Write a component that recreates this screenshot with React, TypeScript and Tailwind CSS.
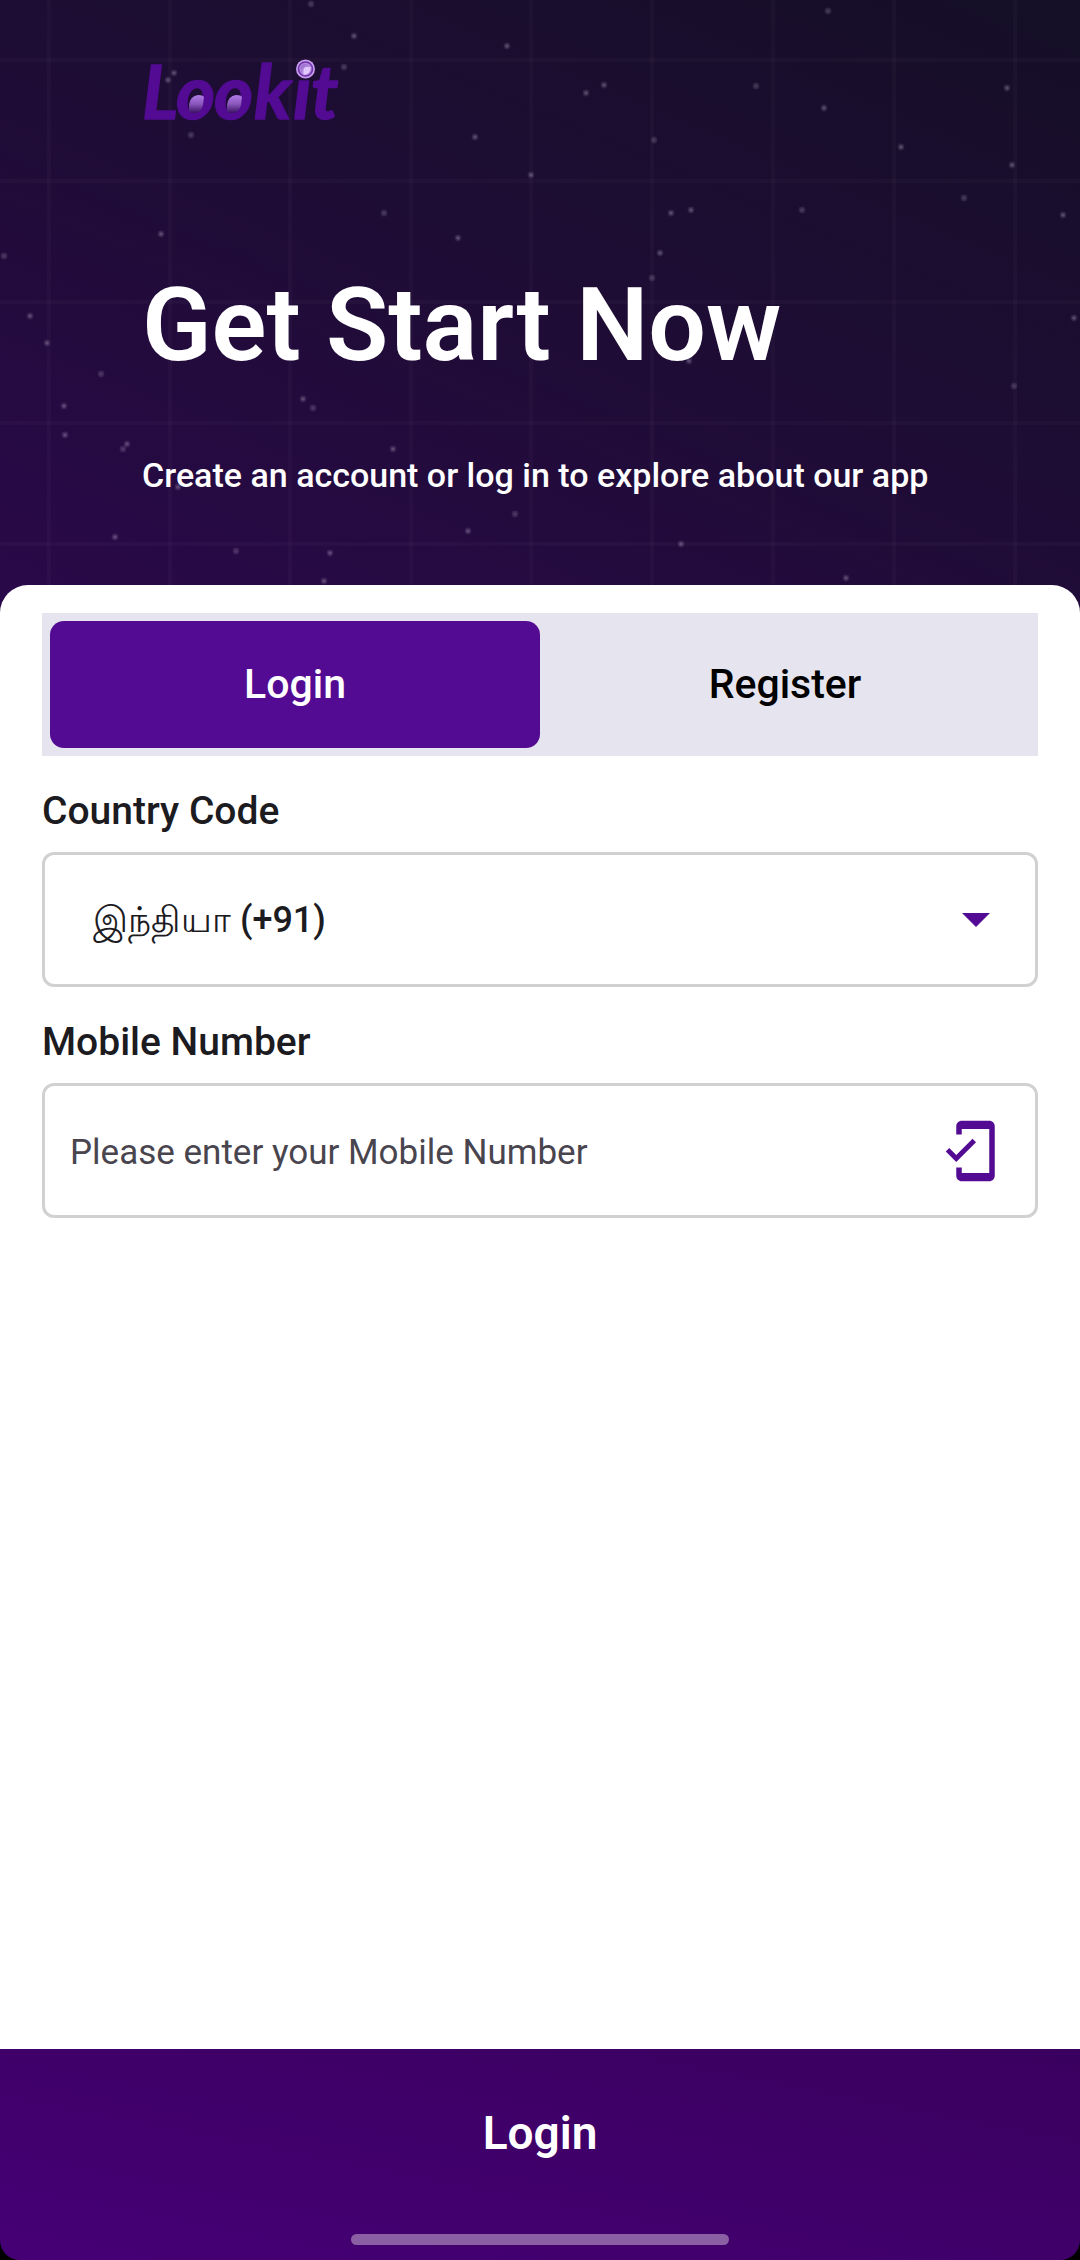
import { useState } from "react";

const stars: [number, number][] = [
  [311, 4], [354, 36], [507, 46], [344, 67], [174, 73], [168, 80], [191, 135], [475, 137], [531, 175],
  [384, 213], [161, 234], [458, 238], [4, 256], [30, 316], [47, 343], [101, 374], [64, 406], [303, 399],
  [313, 408], [65, 435], [127, 444], [123, 449], [393, 449], [178, 487], [515, 514], [468, 531], [115, 537],
  [236, 551], [330, 553], [324, 581], [828, 11], [604, 85], [586, 93], [756, 86], [824, 108], [1007, 88],
  [654, 140], [901, 147], [1012, 165], [964, 198], [691, 210], [671, 213], [802, 210], [1063, 215],
  [660, 253], [652, 278], [1074, 318], [689, 361], [1014, 386], [681, 544], [846, 578],
];
const columns = [49, 170, 290, 411, 531, 652, 773, 894, 1015];
const rows = [60, 181, 302, 423, 544];

function NightSky() {
  return (
    <svg
      className="absolute inset-0 h-full w-full"
      viewBox="0 0 1080 613"
      preserveAspectRatio="xMidYMin slice"
      aria-hidden="true"
    >
      <g stroke="#ffffff" strokeOpacity="0.025" strokeWidth="4">
        {columns.map((x) => (
          <line key={x} x1={x} x2={x} y1="0" y2="613" />
        ))}
        {rows.map((y) => (
          <line key={y} x1="0" x2="1080" y1={y} y2={y} />
        ))}
      </g>
      <g fill="#d9cfe6">
        {stars.map(([x, y], i) => (
          <g key={i}>
            <circle cx={x} cy={y} r="3.4" opacity="0.12" />
            <circle cx={x} cy={y} r="1.8" opacity={i % 3 === 0 ? 0.12 : 0.22} />
          </g>
        ))}
      </g>
    </svg>
  );
}

function Logo() {
  return (
    <svg className="h-[100px] w-[220px]" viewBox="0 0 220 100" role="img" aria-label="Lookit">
      <defs>
        <linearGradient id="eye" x1="0" y1="0" x2="0" y2="1">
          <stop offset="0" stopColor="#b07be6" />
          <stop offset="0.5" stopColor="#8a57bd" />
          <stop offset="1" stopColor="#3a1163" />
        </linearGradient>
        <linearGradient id="lens" x1="0" y1="0" x2="1" y2="1">
          <stop offset="0" stopColor="#8d5cc4" />
          <stop offset="1" stopColor="#d9b8fb" />
        </linearGradient>
      </defs>
      <text
        x="0 34 72 112 151 169"
        y="79"
        fill="#530b94"
        stroke="#530b94"
        strokeWidth="1.5"
        strokeLinejoin="round"
        fontFamily="Lato, sans-serif"
        fontSize="75"
        fontWeight="700"
        fontStyle="italic"
      >
        Lookit
      </text>
      <path d="M47 71V65Q48 56 56 55Q61 55 62 57L61 65Q59 72 54 73H49Z" fill="url(#eye)" />
      <path d="M85 71V65Q86 56 94 55Q99 55 100 57L99 65Q97 72 92 73H87Z" fill="url(#eye)" />
      <circle cx="163.5" cy="29" r="9.5" fill="#c79cf0" />
      <circle cx="163.5" cy="29" r="7" fill="#b58ae0" stroke="#6f35a8" strokeWidth="1.6" />
      <circle cx="163.5" cy="29" r="5" fill="url(#lens)" />
      <path d="M161.500 35V30Q161.500 27 164.500 27H168.500Q168.500 34 161.500 35Z" fill="#e3c8ff" />
    </svg>
  );
}

const boxClass =
  "h-[135px] w-full rounded-xl border-3 border-[#d1d1d1] bg-white text-[#1c1b1f] outline-none";
const labelClass = "flex h-24 items-center pt-[14px] text-[39px] font-medium text-[#1c1b1f]";

export default function App() {
  const [tab, setTab] = useState<"Login" | "Register">("Login");
  return (
    <div className="flex min-h-screen flex-col bg-black font-['Roboto','Noto_Sans',sans-serif]">
      <header className="relative bg-[linear-gradient(203deg,#150f27,#1f0c36_52%,#2a094a)] pb-7 text-white">
        <NightSky />
        <div className="relative flex h-[585px] flex-col items-start pr-8 pl-[142px] pt-10">
          <Logo />
          <h1 className="mt-[120px] text-[102px] leading-[130px] font-semibold whitespace-nowrap">Get Start Now</h1>
          <p className="mt-[65px] text-[34px] leading-10 font-medium whitespace-nowrap">
            Create an account or log in to explore about our app
          </p>
        </div>
      </header>

      <main className="relative -mt-7 flex-1 rounded-t-[28px] bg-white px-[42px] pt-7">
        <div role="tablist" className="grid h-[143px] grid-cols-2 bg-[#e6e4ef] p-2">
          {(["Login", "Register"] as const).map((name) => (
            <button
              key={name}
              type="button"
              role="tab"
              aria-selected={tab === name}
              onClick={() => setTab(name)}
              className={
                tab === name
                  ? "rounded-[14px] bg-[#530b94] text-[41px] font-medium text-white"
                  : "rounded-[14px] text-[41px] font-medium text-black"
              }
            >
              {name}
            </button>
          ))}
        </div>

        <form id="login-form" onSubmit={(e) => e.preventDefault()}>
          <label htmlFor="country" className={labelClass}>
            Country Code
          </label>
          <div className="relative">
            <select id="country" className={`${boxClass} appearance-none pr-28 pl-12 text-[36px] font-medium`}>
              <option>இந்தியா (+91)</option>
            </select>
            <svg
              className="pointer-events-none absolute top-1/2 right-12 h-[14px] w-7 -translate-y-1/2"
              viewBox="0 0 28 14"
              aria-hidden="true"
            >
              <path d="M0 0H28L14 14Z" fill="#530b94" />
            </svg>
          </div>

          <label htmlFor="mobile" className={labelClass}>
            Mobile Number
          </label>
          <div className="relative">
            <input
              id="mobile"
              type="tel"
              placeholder="Please enter your Mobile Number"
              className={`${boxClass} pt-1 pr-28 pl-[25px] text-[35px] placeholder:text-[#49454f]`}
            />
            <svg
              className="pointer-events-none absolute top-1/2 right-[35px] h-[66px] w-[66px] -translate-y-1/2"
              viewBox="0 0 24 24"
              fill="#530b94"
              aria-hidden="true"
            >
              <path d="M19 1H9c-1.1 0-2 .9-2 2v3h2V4h10v16H9v-2H7v3c0 1.1.9 2 2 2h10c1.1 0 2-.9 2-2V3c0-1.1-.9-2-2-2zM7.01 13.47l-2.55-2.55-1.27 1.27L7 16l7.19-7.19-1.27-1.27-5.91 5.93z" />
            </svg>
          </div>
        </form>
      </main>

      <footer className="flex flex-col items-center rounded-b-[20px] bg-linear-to-bl from-[#3a005f] to-[#450075] pb-[15px]">
        <button
          type="submit"
          form="login-form"
          className="h-[168px] w-full text-[46px] font-semibold text-white"
        >
          Login
        </button>
        <div className="mt-[17px] h-[11px] w-[35%] rounded-full bg-[#8a5fa4]" />
      </footer>
    </div>
  );
}
